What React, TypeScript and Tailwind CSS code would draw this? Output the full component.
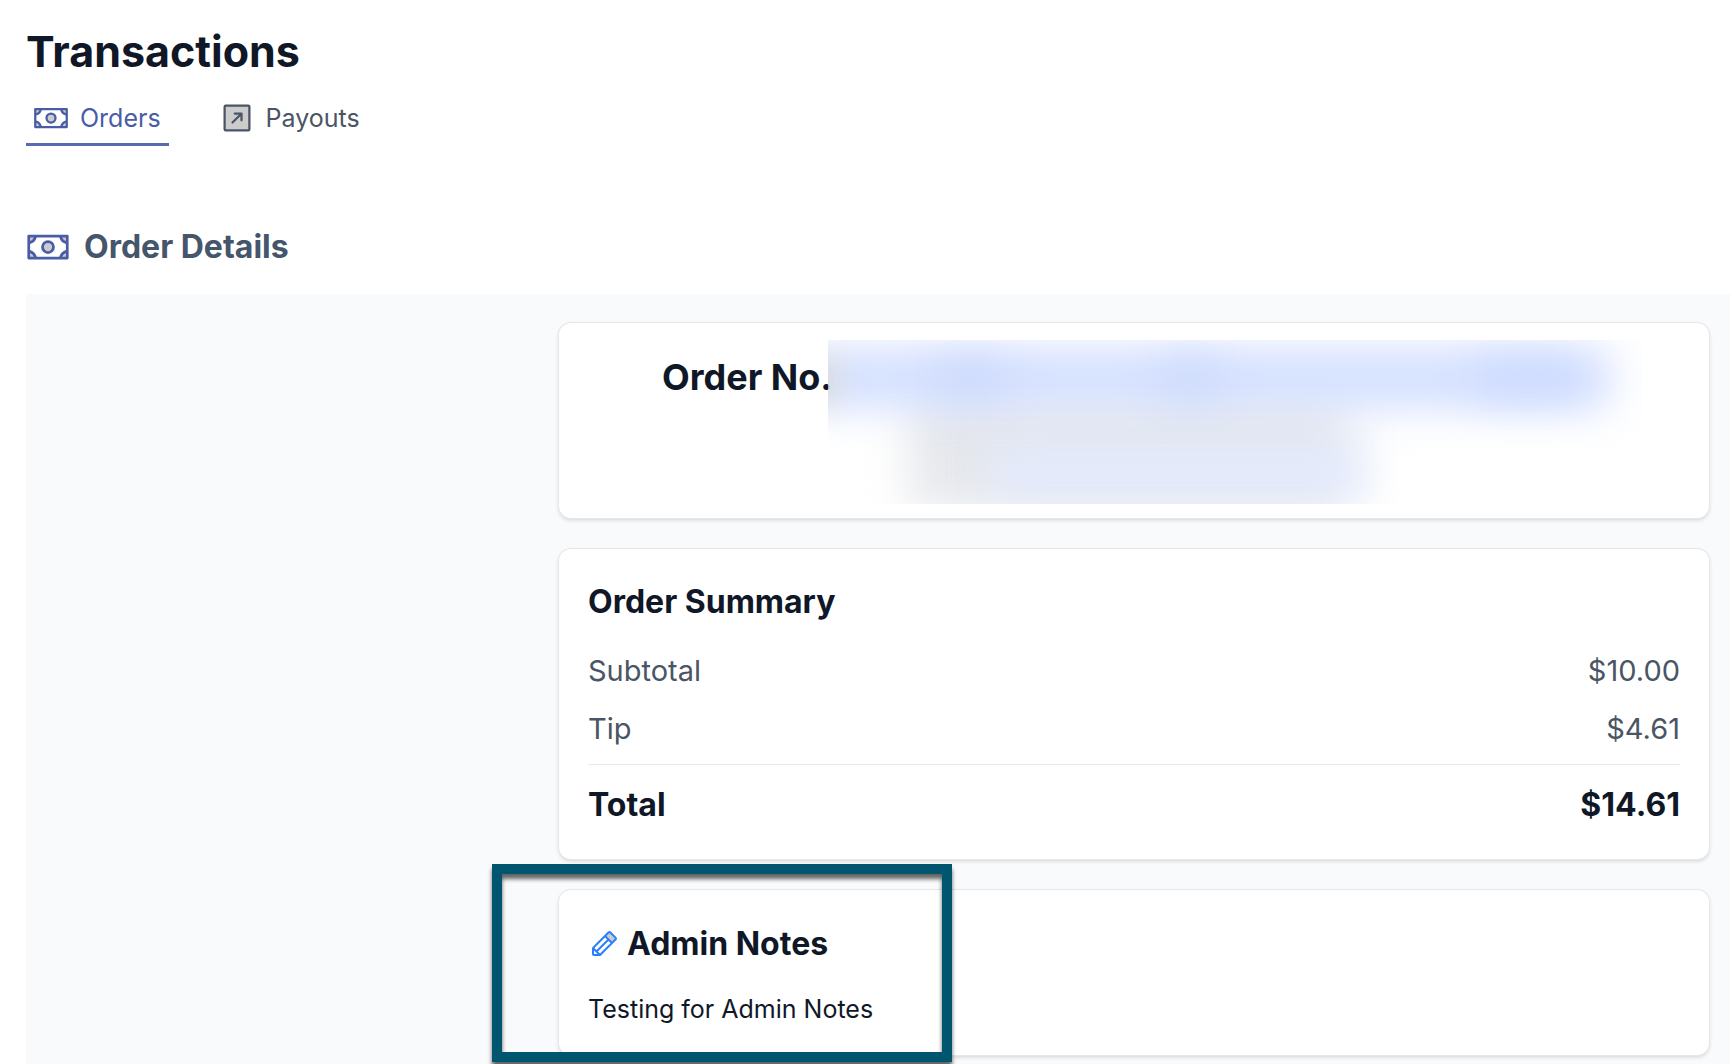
import type { ReactNode } from "react";
import { clsx } from "clsx";
import {
  PiArrowSquareUpRightDuotone,
  PiMoneyDuotone,
  PiPencilDuotone,
} from "react-icons/pi";

type TabProps = {
  label: string;
  icon: ReactNode;
  active?: boolean;
};

// the duotone layer stays black so it reads as grey next to the coloured outline
const DUOTONE = "shrink-0 [&_path[opacity]]:fill-black";

const SUMMARY = [
  { label: "Subtotal", amount: "$10.00" },
  { label: "Tip", amount: "$4.61" },
];

function Tab({ label, icon, active = false }: TabProps) {
  return (
    <a
      href="#"
      aria-current={active ? "page" : undefined}
      className={clsx(
        "flex items-center gap-[11px] border-b-3 pr-2 pb-[7px] pl-[7px] text-[25px] leading-9",
        active
          ? "border-[#566bb3] text-[#4a5ca5]"
          : "border-transparent text-gray-600",
      )}
    >
      {icon}
      {label}
    </a>
  );
}

function Card({ className, children }: { className?: string; children: ReactNode }) {
  return (
    <section
      className={clsx(
        "rounded-xl bg-white shadow-[0_0_0_1px_#e5e7eb,0_2px_4px_rgba(0,0,0,0.16)]",
        className,
      )}
    >
      {children}
    </section>
  );
}

function RedactedDetails() {
  return (
    <div aria-hidden="true" className="relative h-[164px] min-w-0 flex-1 overflow-hidden">
      <div className="absolute top-[60px] left-[10%] h-[110px] w-[54%] bg-[#e6e8ec] blur-[22px]" />
      <div className="absolute top-[106px] left-[20%] h-[48px] w-[46%] bg-[#e2eaff] blur-[22px]" />
      <div className="absolute top-[10px] -left-[1%] h-[56px] w-[97%] bg-[#d0ddff] blur-[22px]" />
      <div className="absolute top-[16px] -left-[4%] h-[50px] w-[5%] bg-gray-300 blur-[16px]" />
      <div className="absolute top-[22px] left-[13%] h-[34px] w-[9%] bg-[#ccd9fb] blur-[20px]" />
      <div className="absolute top-[22px] left-[41%] h-[34px] w-[7%] bg-[#ccd9fb] blur-[20px]" />
      <div className="absolute top-[20px] left-[80%] h-[36px] w-[12%] bg-[#ccdaff] blur-[20px]" />
    </div>
  );
}

export default function App() {
  return (
    <main className="flex min-h-screen flex-col bg-white pl-[26px] font-[Inter,sans-serif] text-gray-900">
      <h1 className="pt-[23px] text-[43px] leading-14 font-bold">Transactions</h1>

      <nav className="mt-[21px] flex gap-[43px]" aria-label="Transactions">
        <Tab
          active
          label="Orders"
          icon={<PiMoneyDuotone className={DUOTONE} size={36} />}
        />
        <Tab
          label="Payouts"
          icon={<PiArrowSquareUpRightDuotone className={DUOTONE} size={36} />}
        />
      </nav>

      <h2 className="mt-[79px] flex items-center gap-[14px] text-[32px] leading-10 font-bold text-slate-600">
        <PiMoneyDuotone className={clsx(DUOTONE, "text-[#4a5ca5]")} size={44} />
        Order Details
      </h2>

      <div className="mt-[25px] grid flex-1 grid-cols-[533fr_1150fr] bg-gray-50 pt-[29px] pr-[21px] pb-2">
        <div className="col-start-2 flex flex-col gap-[31px]">
          <Card className="flex pt-[17px] pr-[67px] pb-[14px] pl-[103px]">
            <h3 className="w-[166px] shrink-0 pt-[17px] text-4xl font-bold whitespace-nowrap">
              Order No.
            </h3>
            <RedactedDetails />
          </Card>

          <Card className="px-[29px] pt-[33px] pb-[34px]">
            <h3 className="text-[32px] leading-10 font-bold">Order Summary</h3>
            <table className="mt-5 w-full">
              <tbody className="text-[29px] leading-[58px] text-gray-600">
                {SUMMARY.map((row) => (
                  <tr key={row.label} className="last:*:pb-1.5">
                    <th scope="row" className="text-left font-normal">
                      {row.label}
                    </th>
                    <td className="text-right">{row.amount}</td>
                  </tr>
                ))}
              </tbody>
              <tfoot className="border-t border-gray-200 text-[32px] leading-10 font-bold">
                <tr>
                  <th scope="row" className="pt-5 text-left">
                    Total
                  </th>
                  <td className="pt-5 text-right">$14.61</td>
                </tr>
              </tfoot>
            </table>
          </Card>

          <div className="relative">
            <Card className="px-[29px] pt-8 pb-7">
              <h3 className="flex items-center gap-[7px] text-[32px] leading-11 font-bold">
                <PiPencilDuotone className={clsx(DUOTONE, "text-blue-500")} size={32} />
                Admin Notes
              </h3>
              <p className="mt-[25px] text-[25px] leading-9">Testing for Admin Notes</p>
            </Card>
            <div className="pointer-events-none absolute -top-[26px] -bottom-[7px] -left-[67px] w-[460px] border-10 border-[#00566f] drop-shadow-[0_5px_2px_rgba(0,0,0,0.6)]" />
          </div>
        </div>
      </div>
    </main>
  );
}
